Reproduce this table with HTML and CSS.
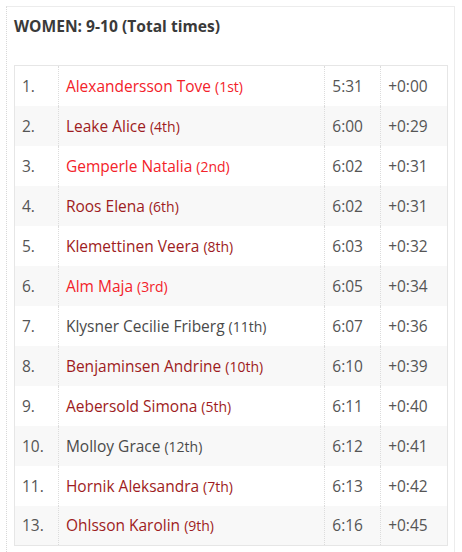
FILE: index.html
```html
<!DOCTYPE html>
<html>
<head>
<meta charset="utf-8">
<link rel="stylesheet" href="styles.css">
</head>
<body>
<div class="box">
  <h3 class="title">WOMEN: 9-10 (Total times)</h3>
  <table class="results">
    <tbody>
      <tr><td class="rank">1.</td><td class="name medal">Alexandersson Tove <span class="pl">(1st)</span></td><td class="time">5:31</td><td class="diff">+0:00</td></tr>
      <tr><td class="rank">2.</td><td class="name club">Leake Alice <span class="pl">(4th)</span></td><td class="time">6:00</td><td class="diff">+0:29</td></tr>
      <tr><td class="rank">3.</td><td class="name medal">Gemperle Natalia <span class="pl">(2nd)</span></td><td class="time">6:02</td><td class="diff">+0:31</td></tr>
      <tr><td class="rank">4.</td><td class="name club">Roos Elena <span class="pl">(6th)</span></td><td class="time">6:02</td><td class="diff">+0:31</td></tr>
      <tr><td class="rank">5.</td><td class="name club">Klemettinen Veera <span class="pl">(8th)</span></td><td class="time">6:03</td><td class="diff">+0:32</td></tr>
      <tr><td class="rank">6.</td><td class="name medal">Alm Maja <span class="pl">(3rd)</span></td><td class="time">6:05</td><td class="diff">+0:34</td></tr>
      <tr><td class="rank">7.</td><td class="name plain">Klysner Cecilie Friberg <span class="pl">(11th)</span></td><td class="time">6:07</td><td class="diff">+0:36</td></tr>
      <tr><td class="rank">8.</td><td class="name club">Benjaminsen Andrine <span class="pl">(10th)</span></td><td class="time">6:10</td><td class="diff">+0:39</td></tr>
      <tr><td class="rank">9.</td><td class="name club">Aebersold Simona <span class="pl">(5th)</span></td><td class="time">6:11</td><td class="diff">+0:40</td></tr>
      <tr><td class="rank">10.</td><td class="name plain">Molloy Grace <span class="pl">(12th)</span></td><td class="time">6:12</td><td class="diff">+0:41</td></tr>
      <tr><td class="rank">11.</td><td class="name club">Hornik Aleksandra <span class="pl">(7th)</span></td><td class="time">6:13</td><td class="diff">+0:42</td></tr>
      <tr><td class="rank">13.</td><td class="name club">Ohlsson Karolin <span class="pl">(9th)</span></td><td class="time">6:16</td><td class="diff">+0:45</td></tr>
    </tbody>
  </table>
</div>
</body>
</html>
```
FILE: styles.css
```css
html, body {
  margin: 0;
  padding: 0;
  background: #fff;
  font-family: "Open Sans", "Liberation Sans", sans-serif;
}
.box {
  margin: 6px 0 0 6px;
  width: 449px;
  min-height: 560px;
  border-top: 1px solid #ececec;
  border-right: 1px solid #ececec;
  border-left: 1px dotted #d8d8d8;
  padding: 9px 0 0 7px;
  box-sizing: border-box;
}
.title {
  margin: 0;
  font-size: 15.6px;
  font-weight: 700;
  color: #3a3a3a;
  line-height: 21px;
}
.results {
  margin-top: 28px;
  border-collapse: collapse;
  width: 434px;
  border: 1px solid #e6e6e6;
  font-size: 15.5px;
  color: #555;
}
.results td {
  height: 40px;
  padding: 0 7px;
  box-sizing: border-box;
  border-left: 1px dotted #dcdcdc;
  vertical-align: middle;
  white-space: nowrap;
}
.results tr:nth-child(even) td {
  background: #f8f8f8;
}
.results td.rank {
  width: 44px;
  padding-left: 7px;
  border-left: none;
}
.results td.name { width: 267px; }
.results td.time { width: 56px; }
.results td.diff { width: 67px; }
.pl { font-size: 14px; }
.medal { color: #f3222a; }
.club { color: #9e1c22; }
.plain { color: #4a4a4a; }
```
